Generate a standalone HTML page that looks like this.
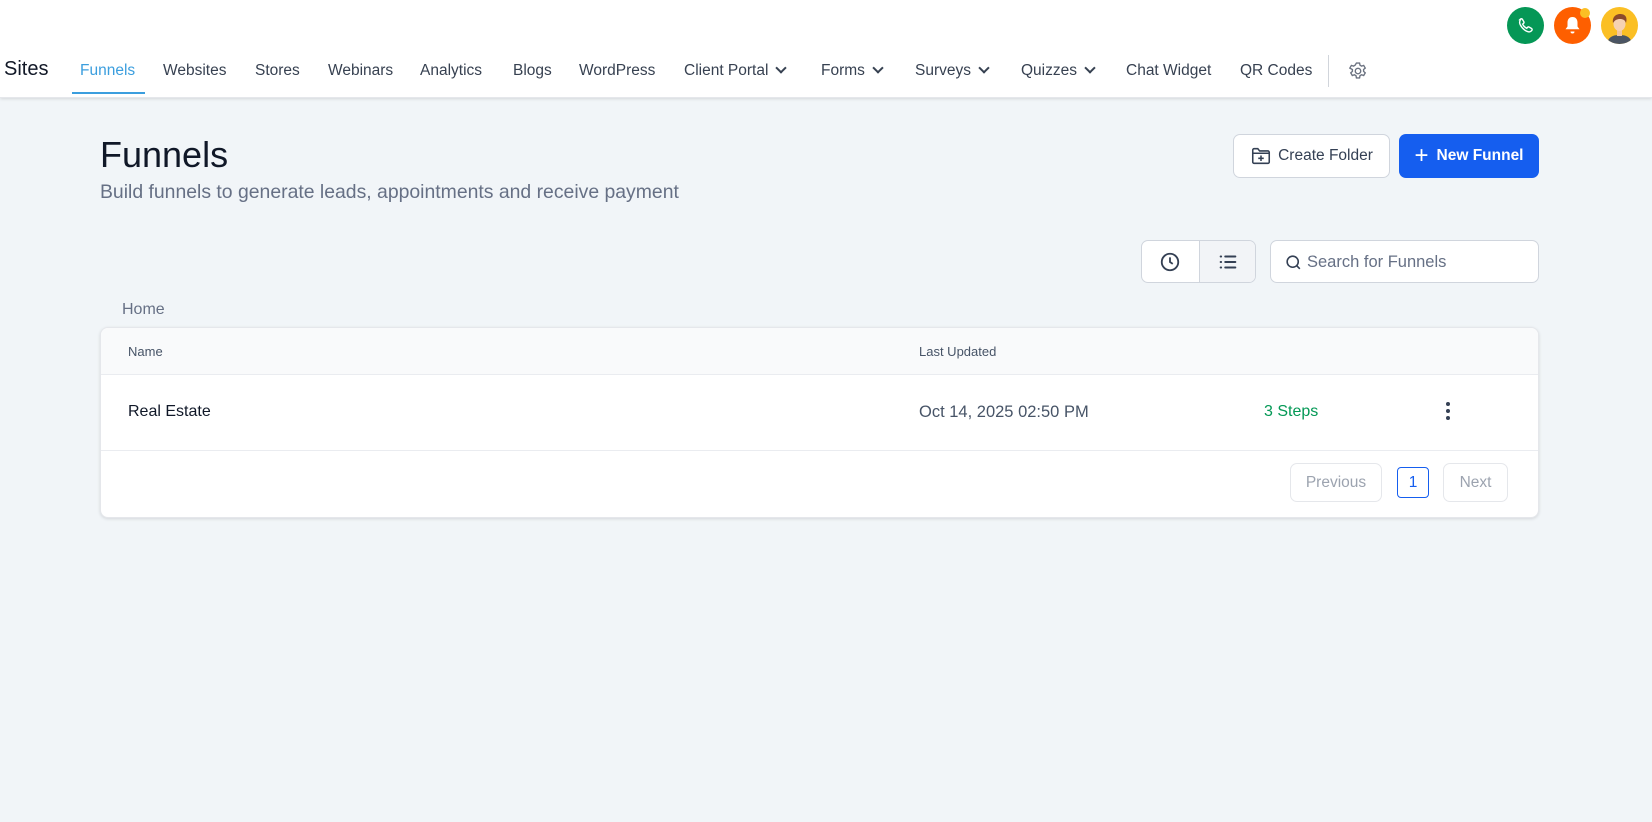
<!DOCTYPE html>
<html><head><meta charset="utf-8"><style>
*{box-sizing:border-box;margin:0;padding:0}
body{width:1652px;height:822px;background:#f1f5f8;font-family:"Liberation Sans",sans-serif;position:relative;overflow:hidden;color:#1f2937}
.a{position:absolute;white-space:nowrap}
.top{position:absolute;left:0;top:0;width:1652px;height:98px;background:#fff;box-shadow:0 1px 3px rgba(0,0,0,.12);border-bottom:1px solid #e5e7eb}
.nav{font-size:15.5px;color:#374151;top:62px}
.chev{display:inline-block;width:8px;height:8px;border-right:2px solid #374151;border-bottom:2px solid #374151;transform:rotate(45deg);margin-left:9px;position:relative;top:-3px}
.circ{position:absolute;width:37px;height:37px;border-radius:50%;top:7px}
.btn{position:absolute;border-radius:7px;font-size:15.5px;display:flex;align-items:center;justify-content:center}
.card{position:absolute;left:100px;top:327px;width:1439px;height:191px;background:#fff;border-radius:8px;box-shadow:0 1px 3px rgba(0,0,0,.12);border:1px solid #e5e7eb;overflow:hidden}
.pg{position:absolute;border:1px solid #e5e7eb;border-radius:7px;color:#9ca3af;font-size:15.5px;display:flex;align-items:center;justify-content:center}
</style></head><body>
<div class="top"></div>
<div class="circ" style="left:1507px;background:#059756">
<svg width="37" height="37" viewBox="0 0 37 37"><path d="M13 12.5c1-1 2-1 2.5 0l1.3 2.2c.4.7.2 1.3-.4 1.8l-.8.6c.8 1.8 2.4 3.4 4.2 4.2l.6-.8c.5-.6 1.1-.8 1.8-.4l2.2 1.3c1 .5 1 1.5 0 2.5-1.2 1.2-2.8 1.3-4.6.4-2.8-1.4-5.2-3.8-6.6-6.6-.9-1.8-.8-3.4.3-5.2z" fill="none" stroke="#fff" stroke-width="1.4"/></svg></div>
<div class="circ" style="left:1554px;background:#fe5f00">
<svg width="37" height="37" viewBox="0 0 37 37"><path d="M18.5 10c-3.2 0-5 2.4-5 5.5v4l-2 2.8h14l-2-2.8v-4c0-3.1-1.8-5.5-5-5.5z" fill="#fff"/><path d="M16.5 24.5a2 2 0 0 0 4 0z" fill="#fff"/></svg></div>
<div class="a" style="left:1580px;top:8px;width:10px;height:10px;border-radius:50%;background:#fbbf24"></div>
<div class="circ" style="left:1601px;background:#fbbf24;overflow:hidden">
<svg width="37" height="37" viewBox="0 0 37 37"><path d="M6 37c1-7 6-9 12.5-9S30 30 31 37z" fill="#4b5563"/><rect x="16" y="22" width="5" height="7" fill="#f2c6a0"/><ellipse cx="18.5" cy="17" rx="6" ry="7" fill="#f6d2b0"/><path d="M12 16c-1-6 3-9 7-9s8 2 6 9c-1-3-3-4-6-4-3 0-5 1-7 4z" fill="#8b4a2b"/></svg></div>

<div class="a" style="left:4px;top:58px;font-size:20px;color:#111827">Sites</div>
<div class="a nav" style="left:80px;color:#3b9ede">Funnels</div>
<div class="a" style="left:72px;top:92px;width:73px;height:2px;background:#3b9ede"></div>
<div class="a nav" style="left:163px">Websites</div>
<div class="a nav" style="left:255px">Stores</div>
<div class="a nav" style="left:328px">Webinars</div>
<div class="a nav" style="left:420px">Analytics</div>
<div class="a nav" style="left:513px">Blogs</div>
<div class="a nav" style="left:579px">WordPress</div>
<div class="a nav" style="left:684px">Client Portal<span class="chev"></span></div>
<div class="a nav" style="left:821px">Forms<span class="chev"></span></div>
<div class="a nav" style="left:915px">Surveys<span class="chev"></span></div>
<div class="a nav" style="left:1021px">Quizzes<span class="chev"></span></div>
<div class="a nav" style="left:1126px">Chat Widget</div>
<div class="a nav" style="left:1240px">QR Codes</div>
<div class="a" style="left:1328px;top:55px;width:1px;height:32px;background:#d1d5db"></div>
<svg class="a" style="left:1347px;top:60px" width="22" height="22" viewBox="0 0 24 24" fill="none" stroke="#6b7280" stroke-width="1.5"><circle cx="12" cy="12" r="3"/><path d="M10.3 3.3h3.4l.5 2.4 1.7 1 2.3-.8 1.7 2.9-1.8 1.6v2l1.8 1.6-1.7 2.9-2.3-.8-1.7 1-.5 2.4h-3.4l-.5-2.4-1.7-1-2.3.8-1.7-2.9 1.8-1.6v-2L3.1 8.8l1.7-2.9 2.3.8 1.7-1z"/></svg>

<div class="a" style="left:100px;top:134px;font-size:36px;color:#101828">Funnels</div>
<div class="a" style="left:100px;top:181px;font-size:19.4px;color:#667085">Build funnels to generate leads, appointments and receive payment</div>

<div class="btn" style="left:1233px;top:134px;width:157px;height:44px;background:#fff;border:1px solid #d0d5dd;color:#344054">
<svg width="22" height="22" viewBox="0 0 24 24" fill="none" stroke="#344054" stroke-width="1.7" style="margin-right:6px"><path d="M3 7V5.5C3 4.7 3.7 4 4.5 4h4l2 2.5h9c.8 0 1.5.7 1.5 1.5v10.5c0 .8-.7 1.5-1.5 1.5h-15C3.7 20 3 19.3 3 18.5z"/><path d="M3 9h18M12 11.5v6M9 14.5h6"/></svg>Create Folder</div>
<div class="btn" style="left:1399px;top:134px;width:140px;height:44px;background:#155eef;color:#fff;font-weight:bold">
<span style="font-size:24px;font-weight:normal;margin-right:8px;line-height:1">+</span>New Funnel</div>

<div class="a" style="left:1141px;top:240px;width:115px;height:43px;border:1px solid #d0d5dd;border-radius:7px;background:#fff;overflow:hidden">
<div class="a" style="left:57px;top:0;width:58px;height:43px;background:#f2f4f7;border-left:1px solid #d0d5dd"></div>
<svg class="a" style="left:17px;top:10px" width="22" height="22" viewBox="0 0 24 24" fill="none" stroke="#344054" stroke-width="2"><circle cx="12" cy="12" r="9"/><path d="M12 7v5l3 2"/></svg>
<svg class="a" style="left:75px;top:10px" width="22" height="22" viewBox="0 0 24 24" fill="none" stroke="#344054" stroke-width="2.2" stroke-linecap="round"><path d="M9 6h11M9 12h11M9 18h11M4 6h.5M4 12h.5M4 18h.5"/></svg>
</div>
<div class="a" style="left:1270px;top:240px;width:269px;height:43px;border:1px solid #d0d5dd;border-radius:7px;background:#fff">
<svg class="a" style="left:13px;top:12px" width="19" height="19" viewBox="0 0 24 24" fill="none" stroke="#344054" stroke-width="2"><circle cx="11" cy="11" r="7"/><path d="M16 16l4 4"/></svg>
<div class="a" style="left:36px;top:12px;font-size:16.5px;color:#667085">Search for Funnels</div></div>

<div class="a" style="left:122px;top:301px;font-size:16px;color:#667085">Home</div>

<div class="card">
<div class="a" style="left:0;top:0;width:1439px;height:47px;background:#f9fafb;border-bottom:1px solid #eaecf0"></div>
<div class="a" style="left:27px;top:16px;font-size:13px;color:#475467">Name</div>
<div class="a" style="left:818px;top:16px;font-size:13px;color:#475467">Last Updated</div>
<div class="a" style="left:27px;top:75px;font-size:16px;color:#101828">Real Estate</div>
<div class="a" style="left:818px;top:75px;font-size:16.5px;color:#475467">Oct 14, 2025 02:50 PM</div>
<div class="a" style="left:1163px;top:75px;font-size:16px;color:#039855">3 Steps</div>
<svg class="a" style="left:1344px;top:73px" width="6" height="22"><circle cx="3" cy="3" r="2" fill="#344054"/><circle cx="3" cy="10" r="2" fill="#344054"/><circle cx="3" cy="17" r="2" fill="#344054"/></svg>
<div class="a" style="left:0;top:122px;width:1439px;height:1px;background:#eaecf0"></div>
<div class="pg" style="left:1189px;top:135px;width:92px;height:39px">Previous</div>
<div class="pg" style="left:1296px;top:139px;width:32px;height:31px;border-color:#155eef;border-radius:4px;color:#155eef">1</div>
<div class="pg" style="left:1342px;top:135px;width:65px;height:39px">Next</div>
</div>
</body></html>
